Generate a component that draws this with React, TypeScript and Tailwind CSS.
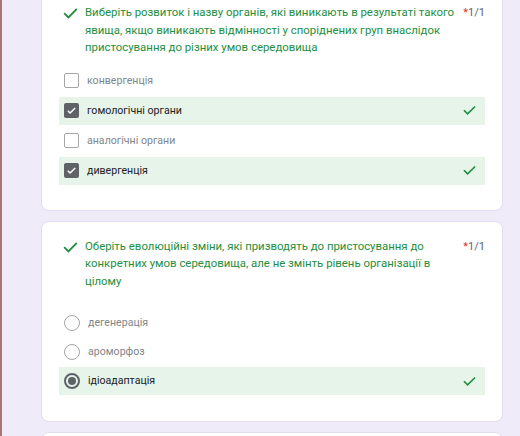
import React from "react";

const green = "#1e8e3e";

function Check({ size = 14, className = "" }: { size?: number; className?: string }) {
  return (
    <svg width={size} height={size} viewBox="0 0 24 24" className={className}>
      <path d="M4 12.5l5 5L20 6.5" fill="none" stroke={green} strokeWidth="2.6" strokeLinecap="square" />
    </svg>
  );
}

function Box({ checked }: { checked: boolean }) {
  if (checked)
    return (
      <div className="w-[15px] h-[15px] rounded-[2px] bg-[#5f6368] flex items-center justify-center">
        <svg width="11" height="11" viewBox="0 0 24 24">
          <path d="M4 12.5l5 5L20 6.5" fill="none" stroke="#fff" strokeWidth="3.4" />
        </svg>
      </div>
    );
  return <div className="w-[15px] h-[15px] rounded-[2px] border-[1.5px] border-[#a6a6a6] bg-white" />;
}

function Radio({ checked }: { checked: boolean }) {
  return (
    <div
      className={
        checked
          ? "w-[16px] h-[16px] rounded-full border-2 border-[#5f6368] flex items-center justify-center"
          : "w-[16px] h-[16px] rounded-full border-[1.5px] border-[#a6a6a6]"
      }
    >
      {checked && <div className="w-[8px] h-[8px] rounded-full bg-[#5f6368]" />}
    </div>
  );
}

type Opt = { label: string; checked: boolean };

function Option({ opt, kind }: { opt: Opt; kind: "box" | "radio" }) {
  return (
    <div
      className={
        "h-[28px] flex items-center pl-[5px] pr-[8px] " + (opt.checked ? "bg-[#e6f4ea]" : "")
      }
    >
      {kind === "box" ? <Box checked={opt.checked} /> : <Radio checked={opt.checked} />}
      <span
        className={
          "ml-[8px] text-[10.6px] flex-1 " + (opt.checked ? "text-[#202124]" : "text-[#80868b]")
        }
      >
        {opt.label}
      </span>
      {opt.checked && <Check size={15} />}
    </div>
  );
}

function Title({ text }: { text: string }) {
  return (
    <div className="flex items-start">
      <div className="w-[26px] pl-[3px] pt-[1px] shrink-0">
        <Check size={17} />
      </div>
      <div className="flex-1 text-[11.4px] leading-[17.5px] text-[#1e8e3e] pr-[6px]">{text}</div>
      <div className="text-[11px] leading-[17.5px] text-[#5f6368] whitespace-nowrap">
        <span className="text-[#d93025]">*</span>1/1
      </div>
    </div>
  );
}

export default function App() {
  const q1: Opt[] = [
    { label: "конвергенція", checked: false },
    { label: "гомологічні органи", checked: true },
    { label: "аналогічні органи", checked: false },
    { label: "дивергенція", checked: true },
  ];
  const q2: Opt[] = [
    { label: "дегенерація", checked: false },
    { label: "ароморфоз", checked: false },
    { label: "ідіоадаптація", checked: true },
  ];

  return (
    <div
      className="w-[520px] h-[436px] overflow-hidden bg-[#efebf8] border-l-2 border-[#a87878] pl-[39px] pr-[17px]"
      style={{ fontFamily: "Roboto, 'Noto Sans', sans-serif" }}
    >
      <div className="flex flex-col gap-[10px]">
        <div className="-mt-[20px] bg-white rounded-[8px] border border-[#e3dff0] pt-[23px] pb-[25px] px-[17px]">
          <Title text="Виберіть розвиток і назву органів, які виникають в результаті такого явища, якщо виникають відмінності у споріднених груп внаслідок пристосування до різних умов середовища" />
          <div className="mt-[10px] flex flex-col gap-[2px]">
            {q1.map((o, i) => (
              <Option key={i} opt={o} kind="box" />
            ))}
          </div>
        </div>

        <div className="bg-white rounded-[8px] border border-[#e3dff0] pt-[16px] pb-[26px] px-[17px]">
          <Title text="Оберіть еволюційні зміни, які призводять до пристосування до конкретних умов середовища, але не змінть рівень організації в цілому" />
          <div className="mt-[19px] flex flex-col gap-[1px]">
            {q2.map((o, i) => (
              <Option key={i} opt={o} kind="radio" />
            ))}
          </div>
        </div>

        <div className="bg-white rounded-[8px] border border-[#e3dff0] h-[60px]" />
      </div>
    </div>
  );
}
